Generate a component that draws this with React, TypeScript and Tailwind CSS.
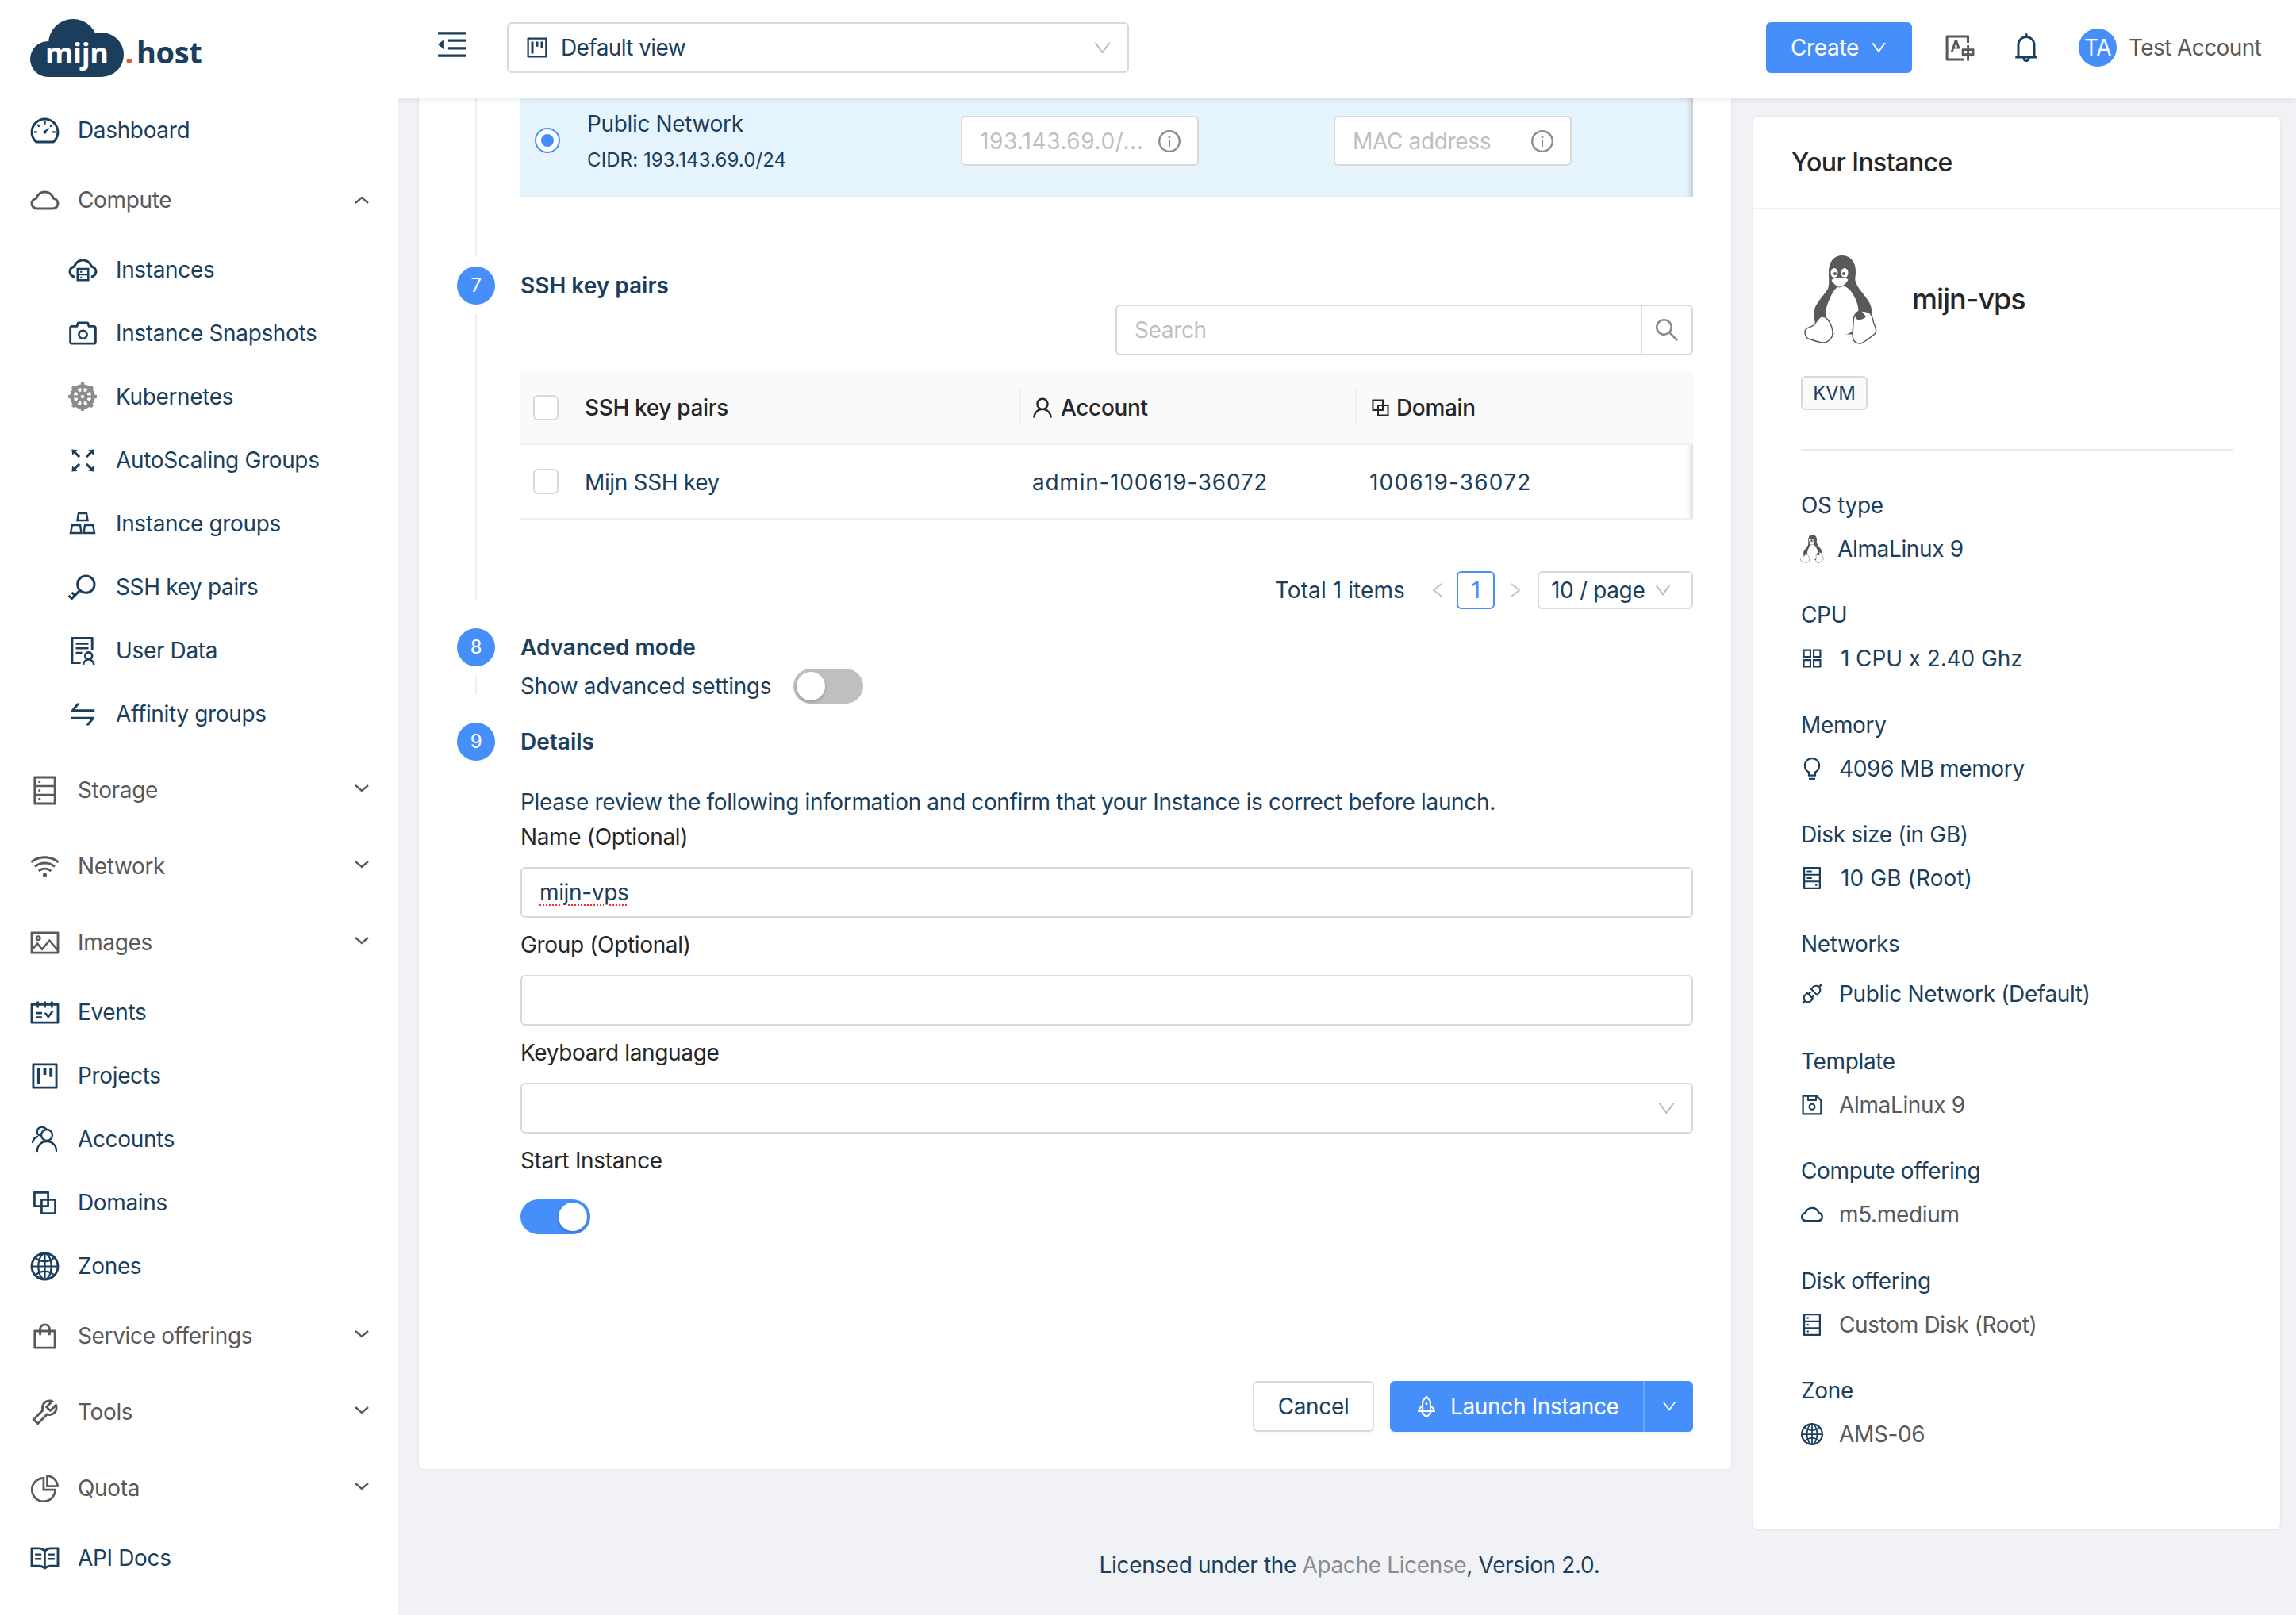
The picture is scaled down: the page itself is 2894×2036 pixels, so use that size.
import type { ReactNode } from 'react'
import {
  AiOutlineApi,
  AiOutlineAppstore,
  AiOutlineBell,
  AiOutlineBlock,
  AiOutlineBulb,
  AiOutlineCamera,
  AiOutlineCloud,
  AiOutlineCloudServer,
  AiOutlineDashboard,
  AiOutlineDatabase,
  AiOutlineDown,
  AiOutlineFullscreen,
  AiOutlineGlobal,
  AiOutlineHdd,
  AiOutlineInfoCircle,
  AiOutlineKey,
  AiOutlineLeft,
  AiOutlineMenuFold,
  AiOutlinePicture,
  AiOutlinePieChart,
  AiOutlineProject,
  AiOutlineRead,
  AiOutlineRight,
  AiOutlineRocket,
  AiOutlineSave,
  AiOutlineSchedule,
  AiOutlineSearch,
  AiOutlineShopping,
  AiOutlineSolution,
  AiOutlineSwap,
  AiOutlineTool,
  AiOutlineTranslation,
  AiOutlineUser,
  AiOutlineWifi,
} from 'react-icons/ai'
import { FaDharmachakra } from 'react-icons/fa'

function Logo() {
  return (
    <svg width="230" height="84" viewBox="0 0 230 84" className="block">
      <g fill="#1a3e5c" transform="translate(0 4)">
        <circle cx="54" cy="31" r="31" />
        <circle cx="90" cy="45" r="28" />
        <circle cx="22.5" cy="50.5" r="22.5" />
        <rect x="22" y="40" width="68" height="33" />
      </g>
      <text x="19" y="60" fontFamily="'Open Sans', sans-serif" fontWeight="700" fontSize="36" fill="#fff">
        mijn
      </text>
      <text y="60" fontFamily="'Open Sans', sans-serif" fontWeight="700" fontSize="38" fill="#1a3e5c">
        <tspan x="119.5" fill="#e8562e">.</tspan>
        <tspan x="134">host</tspan>
      </text>
    </svg>
  )
}

function Tux({ className }: { className: string }) {
  return (
    <svg viewBox="0 0 92 112" className={className}>
      <path
        d="M48 0C36 0 31 10 31 22C31 32 32 36 30 42C24 52 12 62 12 74C12 82 16 92 22 98L70 100C78 92 86 80 85 68C84 56 70 46 66 36C63 30 65 28 65 20C65 8 58 0 48 0Z"
        fill="#595959"
      />
      <path
        d="M46 38C38 40 34 50 30 60C26 70 25 84 32 94C38 102 56 102 62 94C70 84 70 68 66 58C62 48 56 38 46 38Z"
        fill="#fff"
      />
      <path
        d="M22 77C18 78 16 84 12 88C8 91 1 91 1 96C1 100 2 103 5 105C10 106 18 110 24 110C30 110 36 104 36 98C36 90 30 76 22 77Z"
        fill="#fff"
        stroke="#595959"
        strokeWidth="1.5"
      />
      <path
        d="M72 70C66 70 62 76 62 84C62 92 60 100 62 106C64 111 70 112 74 110C80 106 86 102 90 98C92 94 90 91 88 86C86 80 86 74 82 72C78 70 75 70 72 70Z"
        fill="#fff"
        stroke="#595959"
        strokeWidth="1.5"
      />
      <path d="M72 70C67 70 63 75 65 79C68 83 75 81 78 77Z" fill="#595959" />
      <ellipse cx="38" cy="22" rx="4.5" ry="6" fill="#fff" />
      <ellipse cx="51" cy="22" rx="4.5" ry="6" fill="#fff" />
      <circle cx="39" cy="23" r="2" fill="#595959" />
      <circle cx="50" cy="23" r="2" fill="#595959" />
      <path d="M34 31C38 27 50 26 56 30C55 35 48 40 44 40C40 39 36 35 34 31Z" fill="#fff" stroke="#595959" strokeWidth="1" />
    </svg>
  )
}

function AccountsIcon({ className }: { className: string }) {
  return (
    <svg viewBox="0 0 36 36" className={className} fill="none" stroke="currentColor" strokeWidth="2.4" strokeLinecap="round">
      <circle cx="21" cy="13" r="7" />
      <path d="M9 33c0-7 5-12 12-12s12 5 12 12" />
      <path d="M11 13c-3-2-3-7 0-9 3-2 7-1 9 1" />
      <path d="M3 22c1-4 3-6 6-7" />
    </svg>
  )
}

function ClusterIcon() {
  return (
    <svg viewBox="0 0 36 36" className="w-[36px] h-[36px]" fill="none" stroke="currentColor" strokeWidth="2.4">
      <path d="M13 5h10l1.5 9h-13z" />
      <path d="M5 20h10l1.5 10H3z" />
      <path d="M21 20h10l2 10H19.5z" />
    </svg>
  )
}

function Chevron({ up = false }: { up?: boolean }) {
  return (
    <svg
      width="18"
      height="10"
      viewBox="0 0 18 10"
      fill="none"
      stroke="#595959"
      strokeWidth="2.4"
      className={up ? 'ml-auto mr-[37px] shrink-0' : 'ml-auto mr-[37px] -mt-[4px] shrink-0'}
    >
      <path d={up ? 'M1 9l8-7 8 7' : 'M1 1l8 7 8-7'} />
    </svg>
  )
}

type MenuItem = { label: string; icon: ReactNode; group?: boolean; up?: boolean; children?: MenuItem[] }

const menu: MenuItem[] = [
  { label: 'Dashboard', icon: <AiOutlineDashboard /> },
  {
    label: 'Compute',
    icon: <AiOutlineCloud />,
    group: true,
    up: true,
    children: [
      { label: 'Instances', icon: <AiOutlineCloudServer /> },
      { label: 'Instance Snapshots', icon: <AiOutlineCamera /> },
      { label: 'Kubernetes', icon: <FaDharmachakra className="text-[36px] text-[#8c8c8c]" /> },
      { label: 'AutoScaling Groups', icon: <AiOutlineFullscreen /> },
      { label: 'Instance groups', icon: <ClusterIcon /> },
      { label: 'SSH key pairs', icon: <AiOutlineKey /> },
      { label: 'User Data', icon: <AiOutlineSolution /> },
      { label: 'Affinity groups', icon: <AiOutlineSwap /> },
    ],
  },
  { label: 'Storage', icon: <AiOutlineDatabase />, group: true },
  { label: 'Network', icon: <AiOutlineWifi />, group: true },
  { label: 'Images', icon: <AiOutlinePicture />, group: true },
  { label: 'Events', icon: <AiOutlineSchedule /> },
  { label: 'Projects', icon: <AiOutlineProject /> },
  { label: 'Accounts', icon: <AccountsIcon className="w-[36px] h-[36px]" /> },
  { label: 'Domains', icon: <AiOutlineBlock /> },
  { label: 'Zones', icon: <AiOutlineGlobal /> },
  { label: 'Service offerings', icon: <AiOutlineShopping />, group: true },
  { label: 'Tools', icon: <AiOutlineTool />, group: true },
  { label: 'Quota', icon: <AiOutlinePieChart />, group: true },
  { label: 'API Docs', icon: <AiOutlineRead /> },
]

function Sidebar() {
  return (
    <aside className="relative z-20 w-[502px] shrink-0 bg-white">
      <div className="h-[124px] pl-[38px] pt-[20px]">
        <Logo />
      </div>
      {menu.map((item) => (
        <div key={item.label}>
          <div
            className={
              item.group
                ? 'flex h-[96px] items-center text-[#595959]'
                : 'flex h-[80px] items-center text-[#1a3e5c]'
            }
          >
            <span className="ml-[38px] flex w-[36px] shrink-0 justify-center text-[41px] [&_svg]:shrink-0">{item.icon}</span>
            <span className="ml-[24px]">{item.label}</span>
            {item.group && <Chevron up={item.up} />}
          </div>
          {item.children && (
            <div className="mb-2">
              {item.children.map((child) => (
                <div key={child.label} className="flex h-[80px] items-center text-[#1a3e5c]">
                  <span className="ml-[86px] flex w-[36px] shrink-0 justify-center text-[41px] [&_svg]:shrink-0">{child.icon}</span>
                  <span className="ml-[24px]">{child.label}</span>
                </div>
              ))}
            </div>
          )}
        </div>
      ))}
    </aside>
  )
}

function Header() {
  return (
    <header className="relative z-10 flex h-[124px] items-center bg-white pb-1 shadow-[0_2px_8px_rgba(0,0,0,0.08)]">
      <AiOutlineMenuFold className="ml-[45px] -mt-[8px] shrink-0 text-[46px] text-[#1a3e5c]" />
      <div className="ml-[46px] flex h-[64px] w-[784px] shrink-0 items-center rounded-[6px] border-2 border-[#d9d9d9] pl-[20px] pr-[18px] text-[#1a3e5c]">
        <AiOutlineProject className="text-[32px]" />
        <span className="ml-[14px] tracking-[-0.6px]">Default view</span>
        <AiOutlineDown className="ml-auto text-[27px] text-[#bfbfbf]" />
      </div>
      <div className="ml-[803px] flex h-[64px] w-[184px] shrink-0 items-center rounded-[6px] bg-[#468ffa] pl-[31px] text-white shadow-[0_4px_0_rgba(0,0,0,0.02)]">
        <span>Create</span>
        <AiOutlineDown className="ml-[13px] text-[24px]" />
      </div>
      <AiOutlineTranslation className="ml-[40px] shrink-0 text-[41px] text-[#595959]" />
      <AiOutlineBell className="ml-[42px] shrink-0 text-[42px] text-[#1a3e5c]" />
      <div className="ml-[45px] flex h-[48px] w-[48px] shrink-0 items-center justify-center rounded-full bg-[#468ffa] text-white">TA</div>
      <span className="ml-[15px] tracking-[-0.6px] text-[#595959]">Test Account</span>
    </header>
  )
}

function StepRail({ n, line = true, children }: { n: number; line?: boolean; children: ReactNode }) {
  return (
    <div className="flex">
      <div className="flex w-[48px] shrink-0 flex-col items-center">
        <div className="flex h-[48px] w-[48px] items-center justify-center rounded-full bg-[#468ffa] text-[24px] text-white">{n}</div>
        {line && <div className="my-3 w-[2px] flex-1 bg-[#f0f0f0]" />}
      </div>
      <div className="ml-[32px] flex-1">{children}</div>
    </div>
  )
}

function Heading({ children }: { children: ReactNode }) {
  return <div className="flex h-[48px] items-center font-semibold tracking-normal text-[#1a3e5c]">{children}</div>
}

function Label({ children, className }: { children: ReactNode; className: string }) {
  return <div className={`flex h-[44px] items-center text-[#262626] ${className}`}>{children}</div>
}

function NetworkInput({ text, className }: { text: string; className: string }) {
  return (
    <div className={`flex h-[63px] w-[300px] items-center justify-between rounded-[6px] border-2 border-[#d9d9d9] bg-white pl-[22px] pr-[19px] text-[#bfbfbf] ${className}`}>
      <span>{text}</span>
      <AiOutlineInfoCircle className="shrink-0 text-[32px] text-[#8c8c8c]" />
    </div>
  )
}

function Toggle({ on = false }: { on?: boolean }) {
  return (
    <div className={on ? 'flex h-[44px] w-[88px] items-center justify-end rounded-full bg-[#468ffa] pr-1' : 'flex h-[44px] w-[88px] items-center rounded-full bg-[#bfbfbf] pl-1'}>
      <div className="h-[36px] w-[36px] rounded-full bg-white shadow-[0_2px_4px_rgba(0,0,0,0.2)]" />
    </div>
  )
}

function Checkbox() {
  return <div className="h-[32px] w-[32px] rounded-[6px] border-2 border-[#d9d9d9] bg-white" />
}

function MainCard() {
  return (
    <section className="w-[1658px] shrink-0 rounded-b-[8px] border-x-2 border-b-2 border-[#ebebeb] bg-white pb-[47px] pl-[48px] pr-[48px]">
      {/* step 6 is scrolled under the header, only its last row shows */}
      <div className="flex h-[212px]">
        <div className="flex w-[48px] shrink-0 justify-center pb-3">
          <div className="w-[2px] bg-[#f0f0f0]" />
        </div>
        <div className="ml-[32px] flex-1">
          <div className="flex h-[124px] items-start bg-[#e6f4fd] pt-[22px] text-[#1a3e5c] shadow-[inset_-6px_0_6px_-3px_rgba(0,0,0,0.18)]">
            <div className="ml-[18px] mt-[15px] flex h-[32px] w-[32px] items-center justify-center rounded-full border-2 border-[#468ffa] bg-white">
              <div className="h-[16px] w-[16px] rounded-full bg-[#468ffa]" />
            </div>
            <div className="ml-[34px] w-[471px]">
              <div className="flex h-[20px] items-center">Public Network</div>
              <div className="mt-[26px] flex h-[20px] items-center text-[24px] tracking-[0.1px]">CIDR: 193.143.69.0/24</div>
            </div>
            <NetworkInput text="193.143.69.0/..." className="tracking-[0.6px]" />
            <NetworkInput text="MAC address" className="ml-[170px]" />
          </div>
        </div>
      </div>

      <div className="h-[456px]">
        <StepRail n={7}>
          <Heading>SSH key pairs</Heading>
          <div className="flex justify-end">
            <div className="flex h-[64px] w-[728px] rounded-[6px] border-2 border-[#d9d9d9]">
              <span className="flex flex-1 items-center border-r-2 border-[#d9d9d9] pl-[22px] text-[#bfbfbf]">Search</span>
              <span className="flex w-[62px] items-center justify-center text-[36px] text-[#8c8c8c]">
                <AiOutlineSearch />
              </span>
            </div>
          </div>
          <div className="mt-[20px] shadow-[inset_-6px_0_6px_-3px_rgba(0,0,0,0.15)]">
            <div className="flex h-[93px] items-center border-b-2 border-[#f0f0f0] bg-[#fafafa] text-[#262626]">
              <div className="ml-[16px]"><Checkbox /></div>
              <span className="ml-[33px] w-[548px] font-medium">SSH key pairs</span>
              <div className="h-[45px] w-[2px] bg-[#f0f0f0]" />
              <AiOutlineUser className="ml-[11px] text-[32px]" />
              <span className="ml-[7px] w-[371px] font-medium">Account</span>
              <div className="h-[45px] w-[2px] bg-[#f0f0f0]" />
              <AiOutlineBlock className="ml-[15px] text-[30px]" />
              <span className="ml-[5px] font-medium">Domain</span>
            </div>
            <div className="flex h-[94px] items-center border-b-2 border-[#f0f0f0] pt-[2px] text-[#1a3e5c]">
              <div className="ml-[16px] -mt-[2px]"><Checkbox /></div>
              <span className="ml-[33px] w-[564px]">Mijn SSH key</span>
              <span className="w-[425px] tracking-[0.75px]">admin-100619-36072</span>
              <span className="tracking-[1.2px]">100619-36072</span>
            </div>
          </div>
          <div className="mt-[65px] flex h-[48px] items-center justify-end text-[#1a3e5c]">
            <span className="tracking-[0.1px]">Total 1 items</span>
            <AiOutlineLeft className="ml-[29px] text-[24px] text-[#bfbfbf]" />
            <span className="ml-[12px] flex h-[48px] w-[48px] items-center justify-center rounded-[6px] border-2 border-[#468ffa] text-[#468ffa]">1</span>
            <AiOutlineRight className="ml-[14px] text-[24px] text-[#bfbfbf]" />
            <div className="ml-[16px] flex h-[48px] w-[196px] items-center rounded-[6px] border-2 border-[#d9d9d9] pl-[15px]">
              <span>10 / page</span>
              <AiOutlineDown className="ml-[10px] text-[26px] text-[#bfbfbf]" />
            </div>
          </div>
        </StepRail>
      </div>

      <div className="h-[119px]">
        <StepRail n={8}>
          <Heading>Advanced mode</Heading>
          <div className="mt-[3px] flex h-[44px] items-center text-[#1a3e5c]">
            <span>Show advanced settings</span>
            <div className="ml-[28px]"><Toggle /></div>
          </div>
        </StepRail>
      </div>

      <StepRail n={9} line={false}>
        <Heading>Details</Heading>
        <div className="mt-[30px] flex h-[44px] items-center text-[#1a3e5c]">
          Please review the following information and confirm that your Instance is correct before launch.
        </div>
        <Label className="">Name (Optional)</Label>
        <div className="mt-4 flex h-[64px] items-center rounded-[6px] border-2 border-[#d9d9d9] pl-[22px] text-[#1a3e5c]">
          <span className="underline decoration-red-500 decoration-dotted decoration-2 underline-offset-[5px]">mijn-vps</span>
        </div>
        <Label className="mt-3">Group (Optional)</Label>
        <div className="mt-4 h-[64px] rounded-[6px] border-2 border-[#d9d9d9]" />
        <Label className="mt-3">Keyboard language</Label>
        <div className="mt-4 flex h-[64px] items-center justify-end rounded-[6px] border-2 border-[#d9d9d9] pr-[18px]">
          <AiOutlineDown className="text-[27px] text-[#bfbfbf]" />
        </div>
        <Label className="mt-3">Start Instance</Label>
        <div className="mt-[27px]"><Toggle on /></div>
        <div className="mt-[185px] flex justify-end">
          <div className="flex h-[64px] w-[153px] items-center justify-center rounded-[6px] border-2 border-[#d9d9d9] text-[#1a3e5c] shadow-[0_4px_0_rgba(0,0,0,0.02)]">Cancel</div>
          <div className="ml-[20px] flex h-[64px] w-[382px] items-center rounded-[6px] bg-[#468ffa] text-white shadow-[0_4px_0_rgba(0,0,0,0.03)]">
            <AiOutlineRocket className="ml-[30px] shrink-0 text-[32px]" />
            <span className="ml-[14px] w-[243px] shrink-0">Launch Instance</span>
            <div className="flex h-full flex-1 items-center justify-center border-l-2 border-[#6aa5fb]">
              <AiOutlineDown className="text-[22px]" />
            </div>
          </div>
        </div>
      </StepRail>
    </section>
  )
}

type Detail = { label: string; value: string; icon: ReactNode; grey?: boolean; tall?: boolean; gap: string }

const details: Detail[] = [
  { label: 'OS type', value: 'AlmaLinux 9', icon: <Tux className="h-[36px] w-[30px]" />, gap: 'ml-[18px]' },
  { label: 'CPU', value: '1 CPU x 2.40 Ghz', icon: <AiOutlineAppstore />, gap: 'ml-[22px] tracking-[-0.1px]' },
  { label: 'Memory', value: '4096 MB memory', icon: <AiOutlineBulb />, gap: 'ml-5' },
  { label: 'Disk size (in GB)', value: '10 GB (Root)', icon: <AiOutlineHdd />, gap: 'ml-[22px] tracking-[0.1px]' },
  { label: 'Networks', value: 'Public Network (Default)', icon: <AiOutlineApi />, tall: true, gap: 'ml-5' },
  { label: 'Template', value: 'AlmaLinux 9', icon: <AiOutlineSave />, grey: true, gap: 'ml-5' },
  { label: 'Compute offering', value: 'm5.medium', icon: <AiOutlineCloud />, grey: true, gap: 'ml-5' },
  { label: 'Disk offering', value: 'Custom Disk (Root)', icon: <AiOutlineDatabase />, grey: true, gap: 'ml-5' },
  { label: 'Zone', value: 'AMS-06', icon: <AiOutlineGlobal />, grey: true, gap: 'ml-5' },
]

function InstanceCard() {
  return (
    <section className="mt-[21px] h-[1785px] w-[668px] shrink-0 rounded-[8px] border-2 border-[#ebebeb] bg-white">
      <div className="flex h-[117px] items-center border-b-2 border-[#f0f0f0] pl-[48px] text-[32px] font-medium tracking-[-0.55px] text-[#262626]">Your Instance</div>
      <div className="px-[60px] pt-[58px]">
        <div className="flex items-center pl-1">
          <Tux className="h-[112px] w-[92px]" />
          <span className="ml-[44px] -mt-[2px] text-[36px] font-medium tracking-[-1px] text-[#262626]">mijn-vps</span>
        </div>
        <div className="mt-[40px] flex h-[43px] w-[84px] items-center justify-center rounded-[6px] border-2 border-[#d9d9d9] bg-[#fafafa] text-[24px] text-[#1a3e5c]">KVM</div>
        <div className="mt-[49px] h-[2px] bg-[#ebebeb]" />
        <div className="mt-[47px]">
          {details.map((d) => (
            <div key={d.label} className={d.tall ? 'h-[148px]' : 'h-[138.3px]'}>
              <div className="flex h-[44px] items-center text-[#1a3e5c]">{d.label}</div>
              <div className={d.tall ? 'mt-[19px] flex h-[44px] items-center' : 'mt-[11px] flex h-[44px] items-center'}>
                <span className="flex w-[28px] shrink-0 justify-center text-[32px] text-[#1a3e5c] [&_svg]:shrink-0">{d.icon}</span>
                <span className={`${d.gap} ${d.grey ? 'text-[#595959]' : 'text-[#1a3e5c]'}`}>{d.value}</span>
              </div>
            </div>
          ))}
        </div>
      </div>
    </section>
  )
}

export default function App() {
  return (
    <div className="flex h-[2036px] w-[2894px] overflow-hidden bg-[#f0f2f5] font-['Inter',sans-serif] text-[28px] leading-[44px] tracking-[-0.35px]">
      <Sidebar />
      <div className="flex min-w-0 flex-1 flex-col">
        <Header />
        <div className="flex items-start gap-[24px] pl-[24px]">
          <MainCard />
          <InstanceCard />
        </div>
        <footer className="mt-[21px] flex h-[44px] items-center justify-center pl-[6px] text-[#1a3e5c]">
          <span>
            Licensed under the <span className="text-[#8c8c8c]">Apache License</span>, Version 2.0.
          </span>
        </footer>
      </div>
    </div>
  )
}
